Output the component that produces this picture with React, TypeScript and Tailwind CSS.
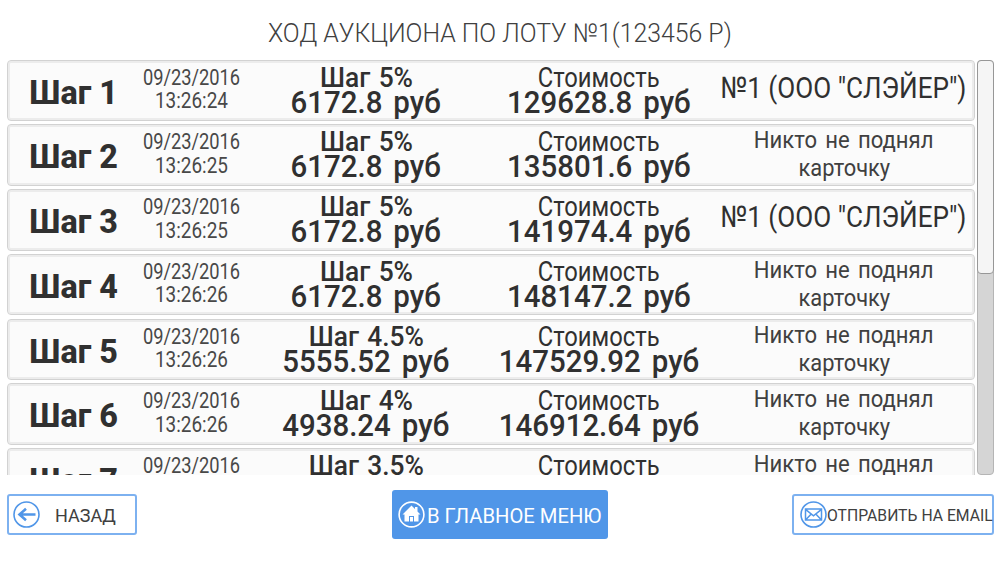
const steps = [
  { time: '13:26:24', pct: '5%', amount: '6172.8', cost: '129628.8', raised: true },
  { time: '13:26:25', pct: '5%', amount: '6172.8', cost: '135801.6', raised: false },
  { time: '13:26:25', pct: '5%', amount: '6172.8', cost: '141974.4', raised: true },
  { time: '13:26:26', pct: '5%', amount: '6172.8', cost: '148147.2', raised: false },
  { time: '13:26:26', pct: '4.5%', amount: '5555.52', cost: '147529.92', raised: false },
  { time: '13:26:26', pct: '4%', amount: '4938.24', cost: '146912.64', raised: false },
  { time: '13:26:27', pct: '3.5%', amount: '4321.0', cost: '146295.4', raised: false },
]

function Row({ n, step }: { n: number; step: (typeof steps)[number] }) {
  return (
    <div className="flex h-[61.5px] shrink-0 rounded-[4px] border border-[#d2d2d2] bg-[#fbfbfb] whitespace-nowrap text-[#303030] shadow-[inset_0_0_0_2px_#ececec]">
      <div className="w-[132px] pt-[11px] text-center text-[34px] leading-[40px] font-extrabold">
        <span className="inline-block scale-x-[0.95]">Шаг {n}</span>
      </div>
      <div className="w-[100px] pt-[5px] text-[22px] leading-[23.5px] text-[#484848]">
        <div className="flex justify-center pl-[3px]"><span className="scale-x-[0.83]">09/23/2016</span></div>
        <div className="flex justify-center pl-[3px]"><span className="scale-x-[0.86]">{step.time}</span></div>
      </div>
      <div className="flex w-[250px] flex-col items-center pt-[4px] leading-[25px]">
        <span className="ml-[2px] scale-x-[0.94] text-[28px] font-medium [word-spacing:2px]">Шаг {step.pct}</span>
        <span className="ml-[1px] scale-x-[0.92] text-[32px] font-medium [word-spacing:4px]">{step.amount} руб</span>
      </div>
      <div className="flex w-[218px] flex-col items-center pt-[4px] leading-[25px]">
        <span className="scale-x-[0.85] text-[28px]">Стоимость</span>
        <span className="-ml-[1px] scale-x-[0.92] text-[32px] font-medium [word-spacing:4px]">{step.cost} руб</span>
      </div>
      {step.raised ? (
        <div className="flex w-[266px] justify-center pt-[9px] pl-[5px] text-[30px] leading-[36px]">
          <span className="scale-x-[0.87]">№1 (ООО "СЛЭЙЕР")</span>
        </div>
      ) : (
        <div className="flex w-[266px] flex-col items-center pt-[1px] pl-[6px] text-[24px] leading-[28px] text-[#404040]">
          <span className="scale-x-[0.92] [word-spacing:3px]">Никто не поднял</span>
          <span className="scale-x-[0.91]">карточку</span>
        </div>
      )}
    </div>
  )
}

function BackIcon() {
  return (
    <svg className="shrink-0" width="27" height="27" viewBox="0 0 27 27" fill="none" stroke="#5096e8">
      <circle cx="13.5" cy="13.5" r="12.5" strokeWidth="1.6" />
      <path d="M22.5 13.5H7M13 7.8L6.5 13.5L13 19.2" strokeWidth="2.6" />
    </svg>
  )
}

function HomeIcon() {
  return (
    <svg className="shrink-0" width="27" height="27" viewBox="0 0 27 27" fill="none">
      <circle cx="13.5" cy="13.5" r="12.4" stroke="#fff" strokeWidth="1.6" />
      <path d="M13.5 4.5L17 8V6H19.5V10.5L22.5 13.5H20.5V20.5H16V15H11V20.5H6.5V13.5H4.5Z" fill="#fff" />
      <path d="M12 16H15V20.5H12Z" fill="#fff" />
    </svg>
  )
}

function MailIcon() {
  return (
    <svg className="shrink-0" width="27" height="27" viewBox="0 0 27 27" fill="none" stroke="#5096e8">
      <circle cx="13.5" cy="13.5" r="12.5" strokeWidth="1.6" />
      <path d="M5.5 8H21.5V19H5.5ZM5.5 8.3L13.5 14.8L21.5 8.3M5.5 19L11 13.2M21.5 19L16 13.2" strokeWidth="1.5" />
    </svg>
  )
}

export default function App() {
  return (
    <div className="flex h-[563px] w-[1000px] flex-col overflow-hidden bg-white font-['Roboto','Liberation_Sans',sans-serif] text-[#404040]">
      <h1 className="flex h-[59.5px] shrink-0 justify-center pt-[17px] pr-[1px] text-[26px] leading-[32px] font-light whitespace-nowrap">
        <span className="scale-x-[0.955]">ХОД АУКЦИОНА ПО ЛОТУ №1(123456 Р)</span>
      </h1>
      <div className="flex h-[415px] shrink-0 gap-[2px] pr-[6px] pl-[7px]">
        <div className="flex w-[968px] flex-col gap-[3.25px] overflow-hidden">
          {steps.map((s, i) => (
            <Row key={i} n={i + 1} step={s} />
          ))}
        </div>
        <div className="w-[17px] rounded-[4px] border border-[#b5b5b5] bg-[#d5d5d5]">
          <div className="-mx-px -mt-px h-[214px] rounded-[4px] border border-[#979797] bg-[#f5f5f5]" />
        </div>
      </div>
      <div className="flex shrink-0 items-start justify-between pt-[15.5px] pr-[6px] pl-[7px] whitespace-nowrap">
        <button className="mt-[4px] flex h-[41px] w-[130px] items-center rounded-[3px] border-2 border-[#7db1f0] pl-[4px] text-[18px]">
          <BackIcon />
          <span className="mt-[2px] ml-[15px]">НАЗАД</span>
        </button>
        <button className="ml-[71px] flex h-[49px] w-[216px] items-center rounded-[3px] bg-[#5096e8] pl-[6px] text-[20px] text-white">
          <HomeIcon />
          <span className="mt-[2px] ml-[2px] origin-left scale-x-[1.01]">В ГЛАВНОЕ МЕНЮ</span>
        </button>
        <button className="mt-[4px] flex h-[41px] w-[202px] items-center rounded-[3px] border-2 border-[#7db1f0] pl-[6px] text-[17px]">
          <MailIcon />
          <span className="mt-[2px] origin-left scale-x-[0.925]">ОТПРАВИТЬ НА EMAIL</span>
        </button>
      </div>
    </div>
  )
}
